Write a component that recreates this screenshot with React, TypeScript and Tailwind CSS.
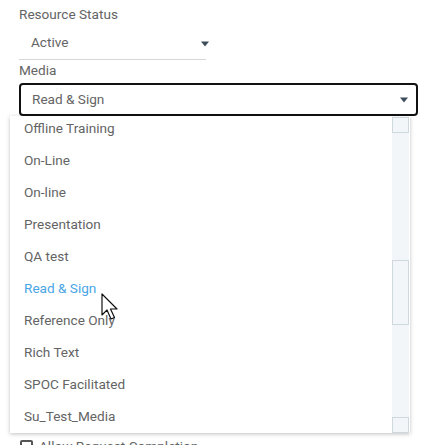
const mediaOptions = [
  "Offline Training",
  "On-Line",
  "On-line",
  "Presentation",
  "QA test",
  "Read & Sign",
  "Reference Only",
  "Rich Text",
  "SPOC Facilitated",
  "Su_Test_Media",
];

function Caret({ className = "" }: { className?: string }) {
  return (
    <svg width="8" height="6" viewBox="0 0 8 6" className={"shrink-0 " + className}>
      <path d="M0 0.5 H8 L4 5.5 Z" fill="#3f4d5a" />
    </svg>
  );
}

function Cursor() {
  return (
    <svg width="20" height="28" viewBox="0 0 20 28" className="absolute left-[101px] top-[293px]">
      <path d="M1 1 V22 L6 17 L10 26 L13.5 24.5 L9.5 16 H16 Z" fill="#fff" stroke="#111" strokeWidth="1.2" strokeLinejoin="round" />
    </svg>
  );
}

export default function App() {
  return (
    <div className="relative w-[426px] h-[445px] overflow-hidden bg-white font-['Roboto',sans-serif] text-[13.6px] text-[#646464]">
      <div className="pl-[19px] pt-[5px]">
        <div className="h-[18px] leading-[18px]">Resource Status</div>
        <div className="mt-[6px] w-[187px] border-b border-[#d8d8d8] h-[31px] flex items-center justify-between pl-[12px]">
          <span className="-mt-[3px]">Active</span>
          <Caret className="-mr-[3px]" />
        </div>
        <div className="mt-[1px] h-[18px] leading-[18px]">Media</div>
      </div>
      <div className="ml-[19px] w-[399px] mt-[4px] h-[33px] border-2 border-[#111] rounded-[4px] flex items-center justify-between pl-[11px] pr-[8px]">
        <span>Read &amp; Sign</span>
        <Caret />
      </div>
      <div className="ml-[10px] w-[400px] h-[317px] bg-white shadow-[0_1px_4px_rgba(0,0,0,0.25)] flex overflow-hidden">
        <ul className="flex-1 -mt-[4px] pl-[14px]">
          {mediaOptions.map((opt) => (
            <li
              key={opt}
              className={
                "h-8 flex items-center " +
                (opt === "Read & Sign" ? "text-[#4aa5e6]" : "")
              }
            >
              {opt}
            </li>
          ))}
        </ul>
        <div className="w-[17px] bg-[#f2f6f8] flex flex-col mr-[1px]">
          <div className="mt-[1px] h-[16px] border border-[#cfd8dc]" />
          <div className="mt-[127px] h-[65px] border border-[#cfd8dc]" />
          <div className="mt-auto h-[16px] border border-[#cfd8dc]" />
        </div>
      </div>
      <div className="flex items-center gap-[6px] pl-[20px] mt-[3px]">
        <div className="w-[13px] h-[13px] border-2 border-[#555] rounded-[2px]" />
        <span>Allow Request Completion</span>
      </div>
      <Cursor />
    </div>
  );
}
